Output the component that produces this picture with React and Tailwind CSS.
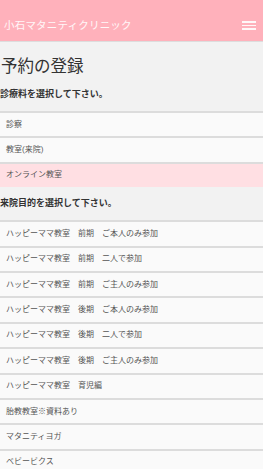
const departments = [
  { label: '診察' },
  { label: '教室(来院)' },
  { label: 'オンライン教室', selected: true },
];

const purposes = [
  'ハッピーママ教室　前期　ご本人のみ参加',
  'ハッピーママ教室　前期　二人で参加',
  'ハッピーママ教室　前期　ご主人のみ参加',
  'ハッピーママ教室　後期　ご本人のみ参加',
  'ハッピーママ教室　後期　二人で参加',
  'ハッピーママ教室　後期　ご主人のみ参加',
  'ハッピーママ教室　育児編',
  '胎教教室※資料あり',
  'マタニティヨガ',
  'ベビービクス',
];

function ListItem({ label, selected }) {
  return (
    <div
      className={`flex h-[25.4px] items-center border-t-2 border-[#dcdcdc] pl-[6px] text-[8px] text-[#555] ${
        selected ? 'bg-[#ffdfe3]' : 'bg-[#fafafa]'
      }`}
    >
      {label}
    </div>
  );
}

export default function App() {
  return (
    <div
      className="min-h-[469px] bg-[#f2f2f2]"
      style={{ fontFamily: 'Roboto, "Noto Sans CJK JP", sans-serif' }}
    >
      <header className="flex h-[42px] items-center justify-between border-b border-[#dddddd] bg-[#ffb1bb] pt-[10px] pl-[4px] pr-[7px]">
        <span className="text-[10.5px] tracking-[0.2px] text-white/90">小石マタニティクリニック</span>
        <button className="flex w-[14px] flex-col gap-[2.2px]">
          <span className="h-[1.5px] w-full bg-white/90" />
          <span className="h-[1.5px] w-full bg-white/90" />
          <span className="h-[1.5px] w-full bg-white/90" />
        </button>
      </header>

      <h1 className="pl-[1px] pt-[15px] pb-[2px] text-[16.5px] leading-[20px] text-[#333]">予約の登録</h1>

      <div className="flex h-[32px] items-center text-[9px] font-bold text-[#333]">診療料を選択して下さい。</div>
      <div>
        {departments.map((d) => (
          <ListItem key={d.label} label={d.label} selected={d.selected} />
        ))}
      </div>

      <div className="flex h-[33px] items-center text-[9px] font-bold text-[#333]">来院目的を選択して下さい。</div>
      <div>
        {purposes.map((p) => (
          <ListItem key={p} label={p} />
        ))}
      </div>
    </div>
  );
}
